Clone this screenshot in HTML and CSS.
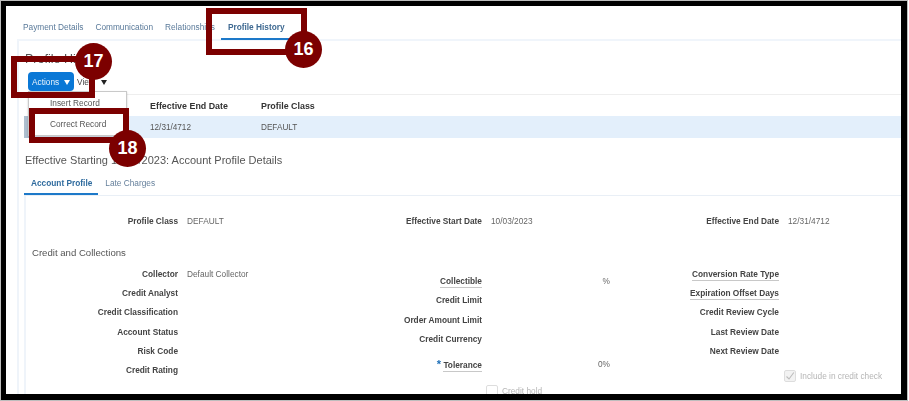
FILE: index.html
```html
<!DOCTYPE html>
<html lang="en">
<head>
<meta charset="utf-8">
<title>Profile History</title>
<link rel="stylesheet" href="styles.css">
</head>
<body>
<div class="screen">
  <div class="page">
    <nav class="tabs">
      <a class="tab">Payment Details</a>
      <a class="tab">Communication</a>
      <a class="tab">Relationships</a>
      <a class="tab tab-on">Profile History</a>
    </nav>
    <main class="panel">
      <h1 class="title">Profile History</h1>
      <div class="toolbar">
        <button class="actions">Actions <span class="caret caret-white"></span></button>
        <span class="view">View <span class="caret"></span></span>
      </div>
      <div class="table">
        <div class="thead">
          <span class="c1">Effective End Date</span>
          <span class="c2">Profile Class</span>
        </div>
        <div class="trow">
          <span class="c1">12/31/4712</span>
          <span class="c2">DEFAULT</span>
        </div>
      </div>
      <h2 class="subtitle">Effective Starting 10/03/2023: Account Profile Details</h2>
      <div class="subtabs">
        <a class="subtab subtab-on">Account Profile</a>
        <a class="subtab">Late Charges</a>
      </div>
      <section class="detail">
        <div class="cols top">
          <div class="field f1"><span class="lab">Profile Class</span><span class="val">DEFAULT</span></div>
          <div class="field f2"><span class="lab">Effective Start Date</span><span class="val">10/03/2023</span></div>
          <div class="field f3"><span class="lab">Effective End Date</span><span class="val">12/31/4712</span></div>
        </div>
        <h3 class="group">Credit and Collections</h3>
        <div class="cols">
          <div class="col">
            <div class="field f1"><span class="lab">Collector</span><span class="val">Default Collector</span></div>
            <div class="field f1"><span class="lab">Credit Analyst</span></div>
            <div class="field f1"><span class="lab">Credit Classification</span></div>
            <div class="field f1"><span class="lab">Account Status</span></div>
            <div class="field f1"><span class="lab">Risk Code</span></div>
            <div class="field f1"><span class="lab">Credit Rating</span></div>
          </div>
          <div class="col col-mid">
            <div class="field f2"><span class="lab"><u class="hint">Collectible</u></span><span class="val pct">%</span></div>
            <div class="field f2"><span class="lab">Credit Limit</span></div>
            <div class="field f2"><span class="lab">Order Amount Limit</span></div>
            <div class="field f2"><span class="lab">Credit Currency</span></div>
            <div class="field f2 tol"><span class="lab"><b class="req">*</b> <u class="hint">Tolerance</u></span><span class="val pct">0%</span></div>
            <div class="field f2 hold"><span class="check"></span><span class="off">Credit hold</span></div>
          </div>
          <div class="col">
            <div class="field f3"><span class="lab"><u class="hint">Conversion Rate Type</u></span></div>
            <div class="field f3"><span class="lab"><u class="hint">Expiration Offset Days</u></span></div>
            <div class="field f3"><span class="lab">Credit Review Cycle</span></div>
            <div class="field f3"><span class="lab">Last Review Date</span></div>
            <div class="field f3"><span class="lab">Next Review Date</span></div>
            <div class="field f3 incl"><span class="check check-on"><svg viewBox="0 0 10 10" width="10" height="10"><path d="M1.5 5.5 4 8 8.8 1.5" fill="none" stroke="#bcbcbc" stroke-width="1.1"/></svg></span><span class="off">Include in credit check</span></div>
          </div>
        </div>
      </section>
    </main>
  </div>

  <div class="menu">
    <div class="item">Insert Record</div>
    <div class="item">Correct Record</div>
  </div>

  <div class="mark m16"></div>
  <div class="mark m17"></div>
  <div class="mark m18"></div>
  <div class="num n16">16</div>
  <div class="num n17">17</div>
  <div class="num n18">18</div>
</div>
</body>
</html>
```

FILE: styles.css
```css
* { box-sizing: border-box; }
html, body { margin: 0; padding: 0; background: #fff; }
body { width: 909px; height: 401px; overflow: hidden; font-family: "Liberation Sans", Arial, sans-serif; }

.screen {
  position: relative;
  width: 906px;
  height: 399px;
  margin: 1px;
  border: solid #000;
  border-width: 5px 6px 6px 5px;
  background: #fff;
  box-shadow: 0 0 0 1px #bdbdbd;
  overflow: hidden;
}
.page { height: 100%; overflow: hidden; filter: blur(0.45px); }

.tabs {
  display: flex;
  align-items: flex-start;
  height: 35px;
  margin-left: 11px;
  border-bottom: 2px solid #f0f5fb;
}
.tab {
  height: 34px;
  padding: 16px 6px 0;
  font-size: 8.3px;
  line-height: 11px;
  color: #5a7a9a;
  white-space: nowrap;
}
.tab-on {
  font-weight: bold;
  color: #3f6a92;
  border-bottom: 2px solid #1d79c9;
  padding: 16px 14px 0 7px;
}

.panel {
  margin-left: 11px;
  border-left: 2px solid #eff4fa;
  padding-left: 6px;
}
.title {
  margin: 0;
  height: 31px;
  padding-top: 11px;
  font-size: 12.5px;
  line-height: 15px;
  font-weight: normal;
  color: #555;
}
.toolbar { display: flex; align-items: center; height: 19px; padding-left: 3px; }
.actions {
  width: 46px;
  height: 19px;
  padding: 0 0 0 4px;
  border: 0;
  border-radius: 4px;
  background: #0a78d6;
  color: #e8f3fc;
  font: 8.3px "Liberation Sans", Arial, sans-serif;
  text-align: left;
  white-space: nowrap;
}
.view { margin-left: 3px; font-size: 8.3px; color: #444; white-space: nowrap; }
.caret {
  display: inline-block;
  margin-left: 2px;
  width: 0;
  height: 0;
  border: solid transparent;
  border-width: 5px 3.5px 0;
  border-top-color: #222;
  vertical-align: 0;
}
.view .caret { margin-left: 4px; }
.caret-white { border-top-color: #fff; }

.table { margin-top: 3px; margin-left: -1px; }
.thead, .trow { display: flex; align-items: center; height: 22px; font-size: 8.2px; }
.thead { border-top: 1px solid #eee; color: #333; font-weight: bold; font-size: 8.9px; }
.trow { background: #e3effb; color: #555; border-left: 5px solid #aebfcf; }
.trow .c1 { margin-left: 121px; }
.thead .c1 { margin-left: 126px; }
.c1 { width: 111px; }

.subtitle {
  margin: 0;
  height: 34px;
  padding-top: 15px;
  font-size: 11px;
  line-height: 14px;
  font-weight: normal;
  color: #555;
}
.subtabs {
  display: flex;
  height: 24px;
  margin-left: -1px;
  border-bottom: 1px solid #e9eff6;
}
.subtab {
  height: 23px;
  padding: 6px 6px 0 7px;
  font-size: 8.3px;
  line-height: 11px;
  color: #66809c;
  white-space: nowrap;
}
.subtab-on {
  padding: 6px 6px 0 7px;
  font-weight: bold;
  color: #2f6b9e;
  border-bottom: 2px solid #1d79c9;
}

.detail {
  margin-left: -1px;
  border-left: 2px solid #eff4fa;
  padding-top: 15px;
  font-size: 8.3px;
}
.cols { display: grid; grid-template-columns: 297px 298px 1fr; }
.top { height: 20px; }
.group {
  margin: 0;
  height: 33px;
  padding: 16px 0 0 6px;
  font-size: 9.6px;
  line-height: 12px;
  font-weight: normal;
  color: #555;
}
.col { display: flex; flex-direction: column; }
.col-mid { padding-top: 7.5px; }
.field { display: flex; align-items: center; height: 19.3px; flex: none; white-space: nowrap; }
.lab { display: block; text-align: right; font-weight: bold; color: #444; flex: none; }
.f1 .lab { width: 152px; margin-right: 9px; }
.f2 .lab { width: 159px; margin-right: 9px; }
.f3 .lab { width: 158px; margin-right: 9px; }
.val { color: #666; }
.pct { width: 119px; text-align: right; }
.hint { text-decoration: none; border-bottom: 1px solid #c8c8c8; padding-bottom: 1px; }
.req { color: #1d6fb8; font-size: 11px; }
.tol { margin-top: 6px; }
.hold { margin-top: 7px; padding-left: 163px; }
.incl { margin-top: 6px; padding-left: 163px; }
.check {
  display: inline-flex;
  align-items: center;
  justify-content: center;
  width: 12px;
  height: 12px;
  margin-right: 4px;
  border: 1px solid #ddd;
  border-radius: 2px;
  flex: none;
}
.check-on { background: #f2f2f2; }
.off { color: #b5b5b5; }

.menu {
  position: absolute;
  left: 22px;
  top: 85px;
  width: 99px;
  height: 45px;
  padding: 1px 0 0;
  background: #fff;
  border: 1px solid #c9c9c9;
  box-shadow: 0 1px 2px rgba(0, 0, 0, .2);
  filter: blur(0.45px);
}
.item {
  height: 21px;
  padding-left: 21px;
  font-size: 8.3px;
  line-height: 20px;
  color: #555;
}

.mark { position: absolute; border: 6px solid #7c0000; }
.m16 { left: 200px; top: 2px; width: 101px; height: 47px; }
.m17 { left: 5px; top: 50px; width: 84px; height: 42px; }
.m18 { left: 23px; top: 102px; width: 100px; height: 35px; }
.num {
  position: absolute;
  width: 37px;
  height: 37px;
  border-radius: 50%;
  background: #7c0000;
  color: #fff;
  font-size: 18px;
  font-weight: bold;
  line-height: 37px;
  text-align: center;
}
.n16 { left: 279px; top: 25px; }
.n17 { left: 69px; top: 37px; }
.n18 { left: 103px; top: 124px; }
```
